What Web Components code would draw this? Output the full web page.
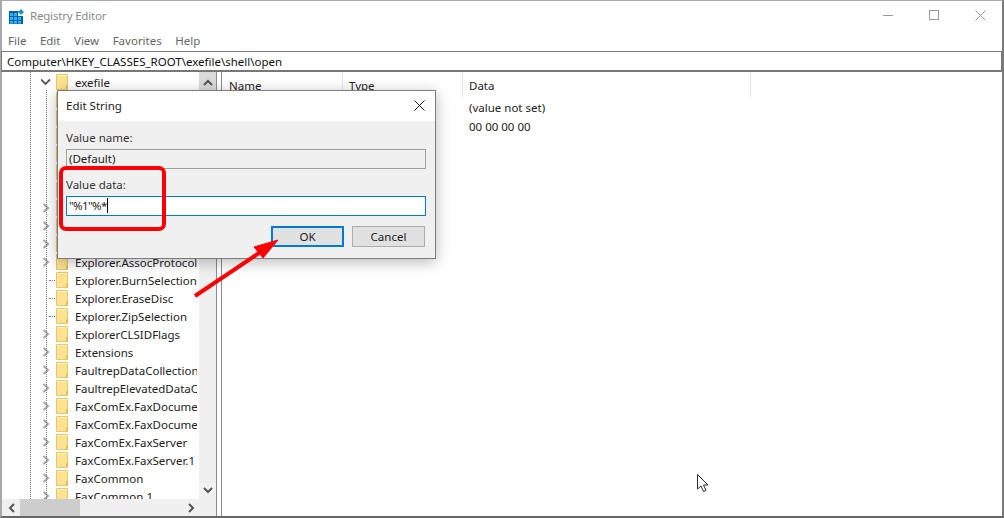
<!DOCTYPE html>
<html><head><meta charset="utf-8"><title>Registry Editor</title>
<style>
html,body{margin:0;padding:0;background:#fff;overflow:hidden}
body{font:11.5px "Noto Sans","Open Sans",sans-serif;color:#1a1a1a}
</style></head><body>
<reg-window>
  <reg-titlebar slot="title">Registry Editor</reg-titlebar>
  <reg-menubar slot="menu"></reg-menubar>
  <reg-address slot="address">Computer\HKEY_CLASSES_ROOT\exefile\shell\open</reg-address>
  <reg-tree slot="tree"></reg-tree>
  <reg-list slot="list"></reg-list>
  <edit-dialog slot="over"></edit-dialog>
  <reg-annotation slot="over"></reg-annotation>
</reg-window>
<script>
function def(name, css, html, init){
  customElements.define(name, class extends HTMLElement{
    constructor(){super();this.attachShadow({mode:'open'});}
    connectedCallback(){
      if(this._i)return;this._i=1;
      const s=this.shadowRoot;
      s.innerHTML='<style>'+css+'</style>'+(typeof html==='function'?html(this):html);
      if(init)init(s,this);
    }
  });
}
def('reg-window',`
  :host{display:block;width:1004px;height:518px;position:relative;box-sizing:border-box;overflow:hidden;background:#fff}
  .frame{box-sizing:border-box;width:1004px;height:518px;display:flex;flex-direction:column;
    border-top:1px solid #a9a9a9;border-left:2px solid #a9a9a9;border-right:2px solid #7b7b7b;border-bottom:2px solid #666}
  .main{flex:1;display:flex;min-height:0}
`,`<div class="frame"><slot name="title"></slot><slot name="menu"></slot><slot name="address"></slot>
  <div class="main"><slot name="tree"></slot><slot name="list"></slot></div></div><slot name="over"></slot>`);

def('reg-titlebar',`
  :host{display:flex;align-items:flex-start;height:30px;color:#8a8a8a;font-size:11.5px;flex:none;position:relative}
  svg.logo{margin:8px 6px 0 7px;flex:none}
  .t{flex:1;line-height:30px;letter-spacing:-.2px}
  .b{width:46px;height:28px;display:flex;align-items:center;justify-content:center}
  .b:last-child{margin-right:-1px}
`,`<svg class="logo" width="15" height="15" viewBox="0 0 15 15">
   <rect x="0" y="2" width="14" height="13" fill="#0a5f9e"/>
   <g fill="#29b6f6"><rect x="1" y="4" width="3" height="3"/><rect x="5" y="4" width="3" height="3"/>
   <rect x="1" y="8" width="3" height="3"/><rect x="5" y="8" width="3" height="3"/><rect x="9" y="8" width="3" height="3"/>
   <rect x="1" y="12" width="3" height="2.6"/><rect x="5" y="12" width="3" height="2.6"/><rect x="9" y="12" width="3" height="2.6"/></g>
   <rect x="9" y="3" width="5" height="4" fill="#fff"/>
   <path d="M12 0l3 3-3 3-3-3z" fill="#1f8fd6"/></svg>
  <span class="t"><slot></slot></span>
  <div class="b"><svg width="11" height="11"><path d="M0 5.5h10" stroke="#999" fill="none"/></svg></div>
  <div class="b"><svg width="11" height="11"><rect x=".5" y=".5" width="9" height="9" stroke="#999" fill="none"/></svg></div>
  <div class="b"><svg width="11" height="11"><path d="M.5.5l10 10M10.5.5l-10 10" stroke="#999" fill="none"/></svg></div>`);

def('reg-menubar',`
  :host{display:flex;height:20px;flex:none;align-items:center;color:#666;font-size:11.5px;padding:0 0 2px 6px;box-sizing:border-box}
  span{margin-right:13.5px}
`,`<span>File</span><span>Edit</span><span>View</span><span>Favorites</span><span>Help</span>`);

def('reg-address',`
  :host{display:flex;align-items:center;box-sizing:border-box;height:21px;flex:none;background:#fff;
   border:1px solid #777;border-bottom:2px solid #777;padding-left:5px;color:#111;font-size:11.5px;margin-left:-1px;white-space:nowrap}
`,`<slot></slot>`);

def('tree-row',`
  :host{display:flex;align-items:center;height:18px;width:195px;overflow:hidden;position:relative;flex:none;white-space:nowrap;font-size:11.5px;color:#222}
  .exp{width:12px;height:18px;margin-left:38px;position:relative;flex:none}
  .exp svg{position:absolute;left:1px;top:4px}
  .dot{position:absolute;left:9px;top:9px;width:6px;border-top:1px dotted #777}
  svg.f{margin-left:4px;flex:none}
  .n{margin-left:6px}
`,(h)=>{
  const e=h.getAttribute('exp')||'';
  let x='';
  if(e==='r')x='<svg width="10" height="10"><path d="M2.5 1l4.500 4-4.500 4" fill="none" stroke="#a6a6a6" stroke-width="2"/></svg>';
  if(e==='d')x='<svg width="10" height="10"><path d="M0 2.500l4.500 4.500 4.500-4.500" fill="none" stroke="#555" stroke-width="1.800"/></svg>';
  if(e==='l')x='<div class="dot"></div>';
  return `<div class="exp">${x}</div>
  <svg class="f" width="13" height="16" viewBox="0 0 13 16"><path d="M.5.5h11v15H.5z" fill="#fde292" stroke="#e8c766"/><path d="M1 1h10v1H1z" fill="#fff3c4"/><path d="M10 11h2v4.500h-2z" fill="#e9bd4f"/></svg>
  <span class="n">${h.getAttribute('name')||''}</span>`;
});

def('reg-tree',`
  :host{display:flex;width:214px;flex:none;border-right:1px solid #8c8c8c;position:relative;flex-direction:column;overflow:hidden}
  .top{flex:1;display:flex;min-height:0}
  .rows{width:197px;overflow:hidden;position:relative;display:flex;flex-direction:column;padding-top:1px;flex:none}
  .rows::before{content:"";position:absolute;left:28px;top:0;bottom:0;border-left:1px dotted #777}
  .rows::after{content:"";position:absolute;left:44px;top:18px;bottom:0;border-left:1px dotted #777}
  .sv{width:17px;flex:none;background:#f0f0f0;display:flex;flex-direction:column;justify-content:space-between;align-items:center}
  .sv .a{height:18px;display:flex;align-items:center;justify-content:center;width:17px}
  .sv .a.up{background:#dadada;height:20px}
  .sh{height:17px;flex:none;background:#f0f0f0;display:flex;align-items:center;position:relative}
  .sh .a{width:18px;height:17px;display:flex;align-items:center;justify-content:center;flex:none}
  .thumb{width:60px;height:17px;background:#cdcdcd;flex:none}
  .sp{flex:1}
`,`<div class="top"><div class="rows" id="r"></div>
  <div class="sv"><div class="a up"><svg width="10" height="7"><path d="M1 6l4-4 4 4" fill="none" stroke="#555" stroke-width="2"/></svg></div>
  <div class="a"><svg width="10" height="7"><path d="M1 1l4 4 4-4" fill="none" stroke="#555" stroke-width="2"/></svg></div></div></div>
  <div class="sh"><div class="a"><svg width="7" height="10"><path d="M6 1L2 5l4 4" fill="none" stroke="#555" stroke-width="2"/></svg></div>
  <div class="thumb"></div><div class="sp"></div>
  <div class="a" style="margin-right:16px"><svg width="7" height="10"><path d="M1 1l4 4-4 4" fill="none" stroke="#555" stroke-width="2"/></svg></div></div>`,
  (s)=>{
    const rows=[['exefile','d'],...Array(6).fill(['','']),['','r'],['','r'],['','r'],
     ['Explorer.AssocProtocol','r'],['Explorer.BurnSelection','l'],['Explorer.EraseDisc','l'],['Explorer.ZipSelection','l'],
     ['ExplorerCLSIDFlags','r'],['Extensions','r'],['FaultrepDataCollectionBroker','r'],['FaultrepElevatedDataCollection','r'],
     ['FaxComEx.FaxDocument','r'],['FaxComEx.FaxDocument.1','r'],['FaxComEx.FaxServer','r'],['FaxComEx.FaxServer.1','r'],['FaxCommon','r'],['FaxCommon.1','r']];
    const r=s.getElementById('r');
    rows.forEach(([n,e])=>{const t=document.createElement('tree-row');t.setAttribute('name',n);t.setAttribute('exp',e);r.appendChild(t);});
  });

def('reg-list',`
  :host{flex:1;display:flex;flex-direction:column;min-width:0;margin-left:4px;border-left:1px solid #8c8c8c;font-size:11.5px;color:#222;background:#fff}
  .h{display:flex;height:25px;flex:none;align-items:center}
  .h span{box-sizing:border-box;padding-left:6px;height:25px;display:flex;align-items:center;border-right:1px solid #e5e5e5;padding-top:1px}
  .h span:nth-child(1){padding-left:7px}
  .h span:nth-child(1),.r span:nth-child(1){width:121px}
  .h span:nth-child(2),.r span:nth-child(2){width:120px}
  .h span:nth-child(3){width:288px}
  .r{display:flex;height:19px;align-items:center;flex:none;position:relative;top:1px}
  .r span{display:block;box-sizing:border-box;padding-left:6px}
`,`<div class="h"><span>Name</span><span>Type</span><span>Data</span></div>
  <div class="r"><span></span><span></span><span>(value not set)</span></div>
  <div class="r"><span></span><span></span><span>00 00 00 00</span></div>`);

def('dlg-button',`
  :host{display:flex;align-items:center;justify-content:center;box-sizing:border-box;width:73px;height:21px;background:#e1e1e1;border:1px solid #adadad;color:#222;font-size:11.5px}
  :host([primary]){border:2px solid #0078d7}
`,`<slot></slot>`);

def('edit-dialog',`
  :host{position:absolute;left:57px;top:90px;width:379px;height:169px;box-sizing:border-box;border:1px solid #7d7d7d;background:#f0f0f0;
    box-shadow:0 3px 14px rgba(0,0,0,.28);display:flex;flex-direction:column;font-size:11.5px;color:#222}
  .tb{height:30px;background:#fff;display:flex;align-items:center;justify-content:space-between;padding:0 10px 2px 8px;flex:none;box-sizing:border-box}
  .body{flex:1;padding:0 9px 0 8px;display:flex;flex-direction:column}
  label{display:block;height:17px;line-height:15px;color:#333}
  .in{box-sizing:border-box;height:20px;border:1px solid #7a7a7a;padding:0 0 2px 2px;display:flex;align-items:center;white-space:nowrap;flex:none}
  .ro{background:#f0f0f0;border-color:#a0a0a0;margin-top:2px}
  .ed{background:#fff;border-color:#0078d7;margin-top:2px;letter-spacing:-.6px}
  .caret{display:inline-block;width:1px;height:15px;background:#000}
  .lb1{margin-top:9px}.lb2{margin-top:8px}
  .btns{display:flex;justify-content:flex-end;gap:8px;margin-top:10px;padding-right:1px;margin-left:-1px}
`,`<div class="tb"><span>Edit String</span><svg width="11" height="11"><path d="M.5.5l10 10M10.5.5l-10 10" stroke="#222" fill="none"/></svg></div>
 <div class="body">
  <label class="lb1">Value name:</label><div class="in ro">(Default)</div>
  <label class="lb2">Value data:</label><div class="in ed">"%1"%*<span class="caret"></span></div>
  <div class="btns"><dlg-button primary>OK</dlg-button><dlg-button>Cancel</dlg-button></div>
 </div>`);

def('reg-annotation',`
  :host{position:absolute;left:0;top:0;width:1004px;height:518px;pointer-events:none;display:block}
  svg{position:absolute;left:0;top:0}
`,`<svg width="1004" height="518" viewBox="0 0 1004 518">
  <rect x="61" y="168" width="103" height="61" rx="5" fill="none" stroke="#fb0007" stroke-width="4"/>
  <path d="M195 296L262 251" stroke="#fb0007" stroke-width="4" fill="none"/>
  <path d="M278 240L254 247L263 258Z" fill="#fb0007" stroke="#fb0007" stroke-width="1"/>
  <path d="M697.500 474.500v14.500l3.500-3 2.500 5.500 2.500-1-2.500-5.500h4.500z" fill="#fff" stroke="#2a2a3a" stroke-width="1"/>
 </svg>`);
</script>
</body></html>
